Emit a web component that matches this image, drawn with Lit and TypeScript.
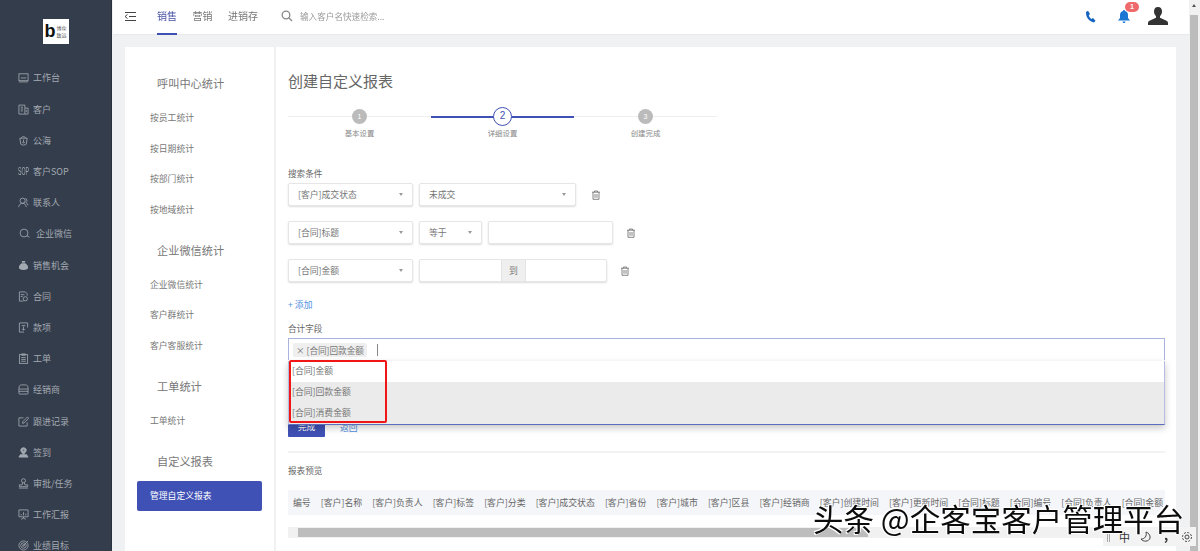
import { LitElement, html, css, svg } from "lit";
import { customElement } from "lit/decorators.js";

const ic = (body: unknown, fill = false) => html`<svg class="mi ${fill ? "filled" : ""}" viewBox="0 0 12 12">${body}</svg>`;

const menu: [string, unknown, boolean?][] = [
  ["工作台", ic(svg`<rect x="1" y="2" width="10" height="7.5"/><path d="M3 6.5h6M1 10.8h10"/>`)],
  ["客户", ic(svg`<path d="M1 11V1.2h6.5V11M7.5 4.5H11V11H1M3 3.5h2.5M3 5.5h2.5M3 7.5h2.5M9 6.5v2.5"/>`)],
  ["公海", ic(svg`<path d="M2 3.5h8L9 10c-1 1.3-5 1.3-6 0zM4 3.5C4 1 8 1 8 3.5M6 5v3M4.5 7.5 6 9l1.5-1.5"/>`)],
  ["客户SOP", html`<span class="sopi">SOP</span>`],
  ["联系人", ic(svg`<circle cx="5" cy="4" r="2.8"/><path d="M.8 11c.3-3 2-4 4.2-4s3.500 1 4 4M8 1.500c2 .4 2.500 3.500.6 4.500 1.300.5 2 1.700 2.400 3"/>`)],
  ["企业微信", ic(svg`<circle cx="5.500" cy="5.500" r="4.300"/><path d="M8.500 8.500 11.500 10"/>`), true],
  ["销售机会", ic(svg`<path d="M4 1h4L7.500 3h-3zM4 3.500h4c2 1.200 3 3 3 4.500 0 2-1.500 3-5 3s-5-1-5-3c0-1.500 1-3.300 3-4.500z"/>`, true)],
  ["合同", ic(svg`<path d="M6 11H1.500V1H8l2 2v2M3 4h4M3 6h2"/><circle cx="8" cy="8.500" r="2.300"/>`)],
  ["款项", ic(svg`<path d="M10.500 6V1h-9v10h5M4 4h4M6 5v4M4.500 7.500 6 9l1.500-1.500"/>`)],
  ["工单", ic(svg`<rect x="1.500" y="1.800" width="9" height="9.500"/><path d="M4 1h4v1.500H4zM3.500 5h5M3.500 7h5M3.500 9h5"/>`)],
  ["经销商", ic(svg`<path d="M1 5c0-3 1-4 3-4h4c2 0 3 1 3 4v5c0 .7-.3 1-1 1H2c-.7 0-1-.3-1-1zM1 5.500h10M1 8h10"/>`)],
  ["跟进记录", ic(svg`<path d="M10 7v4H1V2h5M5 8l.4-2 5-5 1.400 1.500-5 5z"/>`)],
  ["签到", ic(svg`<path d="M6 .8c-2 0-3 1.400-3 2.700C3 5 5 7 6 8c1-1 3-3 3-4.500C9 2.200 8 .800 6 .800zM3 8 1 11h10L9 8" /><circle cx="6" cy="3.500" r="1" fill="#343d4b"/>`, true)],
  ["审批/任务", ic(svg`<circle cx="6" cy="3" r="2.200"/><path d="M5 5.200 4.500 7.500H1.500V9.500H10.500V7.500H7.500L7 5.200M1 11h10"/>`)],
  ["工作汇报", ic(svg`<path d="M1 1h10v7.500H1zM6 8.500V10M3.500 11.200 6 10l2.500 1.200M3.500 7V5.500M6 7V3.500M8.500 7V5"/>`)],
  ["业绩目标", ic(svg`<circle cx="6" cy="6" r="5"/><circle cx="6" cy="6" r="3"/><circle cx="6" cy="6" r="1"/><path d="M6 6 11 1"/>`)],
];

const nav: { t: string; items: string[] }[] = [
  { t: "呼叫中心统计", items: ["按员工统计", "按日期统计", "按部门统计", "按地域统计"] },
  { t: "企业微信统计", items: ["企业微信统计", "客户群统计", "客户客服统计"] },
  { t: "工单统计", items: ["工单统计"] },
];

const cols = ["编号", "[客户]名称", "[客户]负责人", "[客户]标签", "[客户]分类", "[客户]成交状态", "[客户]省份", "[客户]城市", "[客户]区县", "[客户]经销商", "[客户]创建时间", "[客户]更新时间", "[合同]标题", "[合同]编号", "[合同]负责人", "[合同]金额"];

const caret = html`<i class="caret"></i>`;
const trash = html`<svg class="trash" viewBox="0 0 10 10"><path d="M1 2.200h8M3.500 2.200V1h3v1.200M2 2.200V9.300h6V2.200M4 4v3.800M6 4v3.800"/></svg>`;

@customElement("app-root")
export class AppRoot extends LitElement {
  static styles = css`
    :host { display: block; width: 1200px; height: 551px; overflow: hidden; position: relative; font-family: "Noto Sans CJK SC", "Noto Sans", sans-serif; color: #666; background: #f0f1f3; }
    * { box-sizing: border-box; }
    .shell { display: grid; grid-template-columns: 112px 1fr 11px; height: 551px; filter: blur(.4px); }

    .side { background: #343d4b; border-right: 1px solid #2b323d; overflow: hidden; }
    .logo { height: 62.4px; display: flex; justify-content: center; align-items: flex-start; padding-top: 19px; }
    .logobox { width: 26px; height: 25px; background: #fff; display: flex; align-items: center; justify-content: center; gap: 1px; color: #111; }
    .logob { font: 700 18px/18px "Liberation Sans", sans-serif; margin-top: -2px; }
    .logot { font-size: 5px; line-height: 6.500px; color: #555; width: 10px; }
    .mitem { height: 31.200px; display: flex; align-items: center; padding-left: 18px; gap: 4px; font-size: 9px; color: #a3a9b2; white-space: nowrap; }
    .mitem.wide { padding-left: 19px; gap: 6px; }
    .mi { width: 11px; height: 11px; fill: none; stroke: #a3a9b2; stroke-width: .9; flex: none; }
    .mi.filled { stroke-width: 1; }
    .mitem:nth-child(8) .mi { fill: #a3a9b2; stroke: none; }
    .mitem:nth-child(14) .mi { fill: #a3a9b2; }
    .sopi { font: 400 10px/11px "Liberation Sans", sans-serif; width: 11px; color: #a3a9b2; flex: none; transform: scaleX(.52); transform-origin: left; }

    .main { display: flex; flex-direction: column; min-width: 0; padding-left: 1px; }
    .top { height: 35px; background: #fff; border-bottom: 1px solid #e8e9ec; display: flex; align-items: stretch; padding: 0 0 0 11px; flex: none; }
    .burger { width: 13px; height: 11px; margin-top: 11px; fill: none; stroke: #444; stroke-width: 1; flex: none; }
    .tabs { display: flex; gap: 15.500px; margin-left: 20px; font-size: 10px; color: #777; }
    .tab { height: 34px; line-height: 32px; white-space: nowrap; }
    .tab.on { color: #4a55a8; border-bottom: 2px solid #3f51b5; height: 35px; }
    .search { display: flex; align-items: center; gap: 7px; margin-left: 23px; font-size: 8.600px; color: #9a9a9a; height: 32px; }
    .search svg { width: 12px; height: 12px; fill: none; stroke: #888; stroke-width: 1.300; }
    .topr { margin-left: auto; display: flex; align-items: center; height: 32px; padding-right: 21px; }
    .phone { width: 11px; height: 13px; fill: #1565c0; margin-right: 22px; }
    .bellw { position: relative; display: flex; margin-right: 18px; }
    .bell { width: 12px; height: 13px; fill: #1976d2; }
    .badge { position: absolute; top: -8px; left: 7px; width: 14px; height: 10px; border-radius: 5px; background: #ef6a6a; color: #fff; font: 700 7px/10px "Liberation Sans", sans-serif; text-align: center; }
    .user { width: 20px; height: 18px; fill: #333; }

    .body { flex: 1; display: flex; gap: 2px; padding: 12px 0 0 12px; min-height: 0; padding-right: 13px; }
    .lp { width: 149px; background: #fff; padding: 26px 12px 0 12px; flex: none; }
    .gt { height: 20px; line-height: 20px; margin: 14px 0 10px; padding-left: 20px; font-size: 11.200px; color: #777; white-space: nowrap; }
    .gt.first { margin-top: 0; }
    .gi { height: 30.700px; line-height: 30.700px; padding-left: 13px; font-size: 8.800px; color: #777; white-space: nowrap; }
    .gi.on { height: 30px; line-height: 30px; background: #3f51b5; color: #fff; border-radius: 2px; }

    .rp { flex: 1; background: #fff; padding: 24px 11px 0 12px; min-width: 0; }
    .title { height: 20px; line-height: 20px; font-size: 15px; color: #666; }
    .steps { display: grid; grid-template-columns: repeat(3, 143px); margin-top: 15px; }
    .step { display: flex; flex-direction: column; align-items: center; position: relative; font-size: 7.400px; color: #888; }
    .track { position: relative; height: 20px; width: 100%; display: flex; align-items: center; justify-content: center; }
    .track::before { content: ""; position: absolute; left: 0; right: 0; top: 50%; height: 1px; background: #eee; }
    .on .track::before { background: #3f51b5; height: 1.500px; }
    .dot { position: relative; width: 15px; height: 15px; border-radius: 50%; background: #bbb; color: #fff; font: 7px/15px "Liberation Sans", sans-serif; text-align: center; }
    .on .dot { width: 19px; height: 19px; background: #fff; border: 1.500px solid #3f51b5; color: #3f51b5; font-size: 10px; line-height: 16px; }
    .slabel { margin-top: 1px; line-height: 11px; }

    .lab { font-size: 8.600px; color: #666; height: 12px; line-height: 12px; white-space: nowrap; }
    .lab1 { margin-top: 29px; }
    .row { display: flex; align-items: center; gap: 6px; height: 23px; margin-top: 15px; }
    .row.r1 { margin-top: 4px; }
    .f { height: 23px; border: 1px solid #e6e6e6; box-shadow: 0 1px 2px rgba(0,0,0,.14); border-radius: 2px; display: flex; align-items: center; font-size: 8.800px; color: #777; padding-left: 9px; white-space: nowrap; flex: none; background: #fff; }
    .w124 { width: 125px; } .w157 { width: 157px; } .w63 { width: 63px; } .w125 { width: 125px; } .w188 { width: 188px; padding: 0; }
    .caret { margin-left: auto; margin-right: 9px; width: 0; height: 0; border: 2.500px solid transparent; border-top: 3px solid #999; border-bottom: 0; }
    .to { margin-left: 81px; width: 25px; height: 21px; background: #efefef; border: solid #e4e4e4; border-width: 0 1px; display: flex; align-items: center; justify-content: center; }
    .trash { width: 10px; height: 10px; fill: none; stroke: #777; stroke-width: .9; display: block; }
    .t1 { margin-left: 9px; } .t2, .t3 { margin-left: 7px; }
    .add { color: #4f8fe0; font-size: 8.800px; height: 12px; line-height: 12px; margin-top: 17px; }
    .lab2 { margin-top: 11px; }

    .tagw { position: relative; margin-top: 4px; }
    .tagi { height: 22px; border: 1px solid #aab3dd; border-bottom: 0; display: flex; align-items: center; padding-left: 4px; background: #fff; }
    .tag { height: 14px; background: #efefef; border-radius: 2px; padding: 0 3px; font-size: 8.600px; line-height: 14px; color: #777; white-space: nowrap; }
    .cur { width: 1px; height: 12px; background: #888; margin-left: 10px; }
    .dd { position: absolute; left: 0; right: 0; top: 23px; z-index: 3; background: #fff; border: 1px solid #b6bde2; border-top: 0; border-bottom-color: #5b6bc0; box-shadow: 0 3px 7px rgba(0,0,0,.22); font-size: 8.800px; color: #777; }
    .op { height: 21px; line-height: 20px; padding-left: 3px; white-space: nowrap; }
    .op.hv { background: #ebebeb; }
    .red { position: absolute; left: 0; top: -1px; width: 98px; height: 63px; border: 2px solid #f01616; border-radius: 2px; z-index: 4; }

    .btns { display: flex; align-items: center; margin-top: 57px; font-size: 8.800px; }
    .done { width: 37px; height: 20px; background: #3f51b5; color: #fff; line-height: 20px; text-align: center; border-radius: 1px; }
    .back { margin-left: 15px; color: #4f8fe0; }
    .hr { height: 1.500px; background: #f3f3f3; margin-top: 14px; }
    .lab3 { margin-top: 11px; }
    .tw { overflow: hidden; margin-top: 14px; }
    .thead { height: 25px; background: #f5f6fa; display: flex; align-items: center; width: max-content; min-width: 100%; }
    .th { padding: 0 5px; font-size: 8.900px; line-height: 25px; color: #666; white-space: nowrap; flex: none; }
    .sb { height: 10.500px; margin-top: 12.500px; background: #f1f1f1; padding: 1px 0 1px 10px; display: flex; }
    .thumb { width: 570px; background: #bdbdbd; }

    .vbar { background: #f1f1f1; position: relative; padding: 15px 2px 0 1px; display: flex; }
    .vthumb { flex: 1; background: #bcbcbc; }
    .vup { position: absolute; top: 4px; left: 3px; border: 2.500px solid transparent; border-bottom: 3px solid #555; border-top: 0; }

    .wm { position: absolute; left: 813px; top: 498px; z-index: 6; font-size: 30.500px; line-height: 40px; color: #0c0c0c; white-space: nowrap; text-shadow: -1px -1px 0 #fff, 1px -1px 0 #fff, -1px 1px 0 #fff; }
    .ime { position: absolute; left: 1103px; top: 527px; width: 93px; height: 19px; background: #f3f3f3; z-index: 5; display: flex; align-items: center; gap: 9px; padding-left: 4px; font-size: 11px; color: #333; }
    .ime svg { width: 12px; height: 12px; fill: none; stroke: #444; stroke-width: 1; flex: none; }
    .ime .cm { width: 12px; text-align: center; font-weight: 700; font-size: 13px; line-height: 12px; margin-top: -3px; }
    .sep { width: 3px; height: 10px; border-left: 1px solid #aaa; border-right: 1px solid #aaa; }
  `;

  render() {
    return html`
      <div class="shell">
        <aside class="side">
          <div class="logo"><div class="logobox"><span class="logob">b</span><span class="logot">博众致远</span></div></div>
          ${menu.map(([t, i, w]) => html`<div class="mitem ${w ? "wide" : ""}">${i}<span>${t}</span></div>`)}
        </aside>
        <div class="main">
          <header class="top">
            <svg class="burger" viewBox="0 0 13 11"><path d="M1 1.500h11M5 5.500h7M1 9.500h11"/><path d="M3.500 3.500 1 5.500l2.500 2" /></svg>
            <nav class="tabs"><div class="tab on">销售</div><div class="tab">营销</div><div class="tab">进销存</div></nav>
            <div class="search"><svg viewBox="0 0 12 12"><circle cx="5" cy="5" r="3.800"/><path d="m8 8 3 3"/></svg><span>输入客户名快速检索...</span></div>
            <div class="topr">
              <svg class="phone" viewBox="0 0 11 13"><path d="M1 2 3 .8 5 4 3.800 5.200c.4 1.600 1.400 3 2.600 3.800L8 8l2.500 2.800L9 12.500C4.500 12 .5 7 1 2z"/></svg>
              <div class="bellw"><svg class="bell" viewBox="0 0 12 13"><path d="M6 0c.6 0 1 .4 1 1 2 .5 3 2 3 4v3l2 2.500H0L2 8V5c0-2 1-3.500 3-4 0-.6.4-1 1-1zM4.500 11.500h3C7.300 12.500 6.700 13 6 13s-1.300-.5-1.500-1.500z"/></svg><span class="badge">1</span></div>
              <svg class="user" viewBox="0 0 20 18"><path d="M10 0c2.800 0 4 2 4 4.500 0 2-1 3.800-2 4.700v1.500l6 2.800c1.300.6 2 1.500 2 2.500v2H0v-2c0-1 .7-1.900 2-2.500l6-2.800V9.200C7 8.300 6 6.500 6 4.500 6 2 7.200 0 10 0z"/></svg>
            </div>
          </header>
          <div class="body">
            <section class="lp">
              ${nav.map((g, n) => html`<div class="gt ${n === 0 ? "first" : ""}">${g.t}</div>${g.items.map((i) => html`<div class="gi">${i}</div>`)}`)}
              <div class="gt">自定义报表</div>
              <div class="gi on">管理自定义报表</div>
            </section>
            <section class="rp">
              <div class="title">创建自定义报表</div>
              <div class="steps">
                <div class="step"><div class="track"><span class="dot">1</span></div><span class="slabel">基本设置</span></div>
                <div class="step on"><div class="track"><span class="dot">2</span></div><span class="slabel">详细设置</span></div>
                <div class="step"><div class="track"><span class="dot">3</span></div><span class="slabel">创建完成</span></div>
              </div>
              <div class="lab lab1">搜索条件</div>
              <div class="row r1"><div class="f w124">[客户]成交状态${caret}</div><div class="f w157">未成交${caret}</div><span class="t1">${trash}</span></div>
              <div class="row"><div class="f w124">[合同]标题${caret}</div><div class="f w63">等于${caret}</div><div class="f w125"></div><span class="t2">${trash}</span></div>
              <div class="row"><div class="f w124">[合同]金额${caret}</div><div class="f w188"><span class="to">到</span></div><span class="t3">${trash}</span></div>
              <div class="add">+ 添加</div>
              <div class="lab lab2">合计字段</div>
              <div class="tagw">
                <div class="tagi"><span class="tag">× [合同]回款金额</span><span class="cur"></span></div>
                <div class="dd">
                  <div class="op">[合同]金额</div>
                  <div class="op hv">[合同]回款金额</div>
                  <div class="op hv">[合同]消费金额</div>
                  <div class="red"></div>
                </div>
              </div>
              <div class="btns"><div class="done">完成</div><div class="back">返回</div></div>
              <div class="hr"></div>
              <div class="lab lab3">报表预览</div>
              <div class="tw"><div class="thead">${cols.map((c) => html`<div class="th">${c}</div>`)}</div></div>
              <div class="sb"><div class="thumb"></div></div>
            </section>
          </div>
        </div>
        <div class="vbar"><i class="vup"></i><div class="vthumb"></div></div>
      </div>
      <div class="wm">头条 @企客宝客户管理平台</div>
      <div class="ime"><span class="sep"></span><span>中</span>
        <svg viewBox="0 0 12 12"><path d="M7 1c1 4-1 7-5 7 2 3 8 3 9-1 .5-3-1.500-5-4-6z"/></svg>
        <span class="cm">,</span>
        <svg viewBox="0 0 12 12"><circle cx="6" cy="6" r="2"/><circle cx="6" cy="6" r="4.500" stroke-dasharray="2 1.500"/></svg>
      </div>
    `;
  }
}
